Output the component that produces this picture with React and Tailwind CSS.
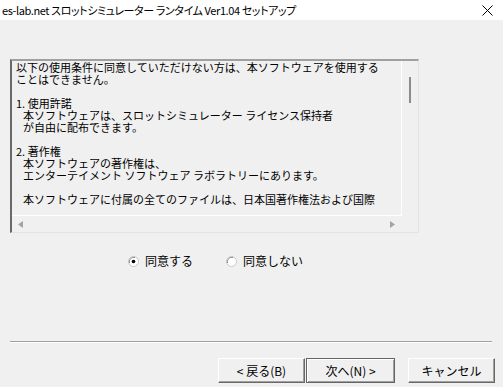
import React from 'react';

const lines = [
  ['以下の使用条件に同意していただけない方は、本ソフトウェアを使用する', 0],
  ['ことはできません。', 0],
  ['', 0],
  ['1. 使用許諾', 0],
  ['本ソフトウェアは、スロットシミュレーター ライセンス保持者', 1],
  ['が自由に配布できます。', 1],
  ['', 0],
  ['2. 著作権', 0],
  ['本ソフトウェアの著作権は、', 1],
  ['エンターテイメント ソフトウェア ラボラトリーにあります。', 1],
  ['', 0],
  ['本ソフトウェアに付属の全てのファイルは、日本国著作権法および国際', 1],
];

function Radio({ checked, label }) {
  return (
    <label className="flex items-center gap-[6px]">
      <svg width="11" height="11" viewBox="0 0 11 11">
        <circle cx="5.5" cy="5.5" r="5" fill="#ffffff" stroke="#c8c8c8" strokeWidth="1" />
        <path d="M1.5 7 A4.5 4.5 0 0 1 7 1.5" fill="none" stroke="#808080" strokeWidth="1" />
        {checked && <circle cx="5.5" cy="5.5" r="1.8" fill="#000000" />}
      </svg>
      <span>{label}</span>
    </label>
  );
}

function Button({ label, primary }) {
  return (
    <button
      className={
        primary
          ? 'w-[89px] h-[25px] border border-[#646464] bg-[#f0f0f0] shadow-[inset_1px_1px_0_#ffffff,inset_-1px_-1px_0_#a0a0a0]'
          : 'w-[87px] h-[25px] border-t border-l border-t-white border-l-white border-r border-b border-r-[#696969] border-b-[#696969] bg-[#f0f0f0] shadow-[inset_-1px_-1px_0_#a0a0a0]'
      }
    >
      {label}
    </button>
  );
}

export default function App() {
  return (
    <div
      className="w-[503px] h-[387px] bg-[#f0f0f0] flex flex-col text-[12px] text-black overflow-hidden"
      style={{ fontFamily: '"Noto Sans CJK JP", "Noto Sans", sans-serif' }}
    >
      {/* title bar */}
      <div className="h-[20px] bg-white flex items-center justify-between pl-[2px] pr-[6px]">
        <span className="text-[11px] leading-none tracking-[-0.4px] [font-feature-settings:'palt']">
          es-lab.net スロットシミュレーター ランタイム Ver1.04 セットアップ
        </span>
        <svg width="11" height="11" viewBox="0 0 11 11" className="mr-[4px]">
          <path d="M0.5 0.5 L10.5 10.5 M10.5 0.5 L0.5 10.5" stroke="#000" strokeWidth="1" />
        </svg>
      </div>

      {/* license box */}
      <div className="pl-[10px] pt-[39px]">
        <div className="w-[409px] h-[174px] border-t-2 border-l-2 border-t-[#a0a0a0] border-l-[#696969] border-r border-b border-r-[#e3e3e3] border-b-[#e3e3e3] flex flex-col">
          <div className="flex h-[155px]">
            <div className="w-[390px] border-r border-b border-white overflow-hidden pl-[4px]">
              {lines.map(([l, indent], i) => (
                <div key={i} className={indent ? 'h-[12px] leading-[12px] text-[11px] pl-[7px]' : 'h-[12px] leading-[12px] text-[11px]'}>
                  {l}
                </div>
              ))}
            </div>
            <div className="flex-1 pt-[16px] pl-[7px]">
              <div className="w-[2px] h-[26px] bg-[#8c8c8c]" />
            </div>
          </div>
          <div className="flex-1 flex items-center justify-between pl-[6px] pr-[23px]">
            <svg width="5" height="7" viewBox="0 0 5 7">
              <path d="M5 0 L0 3.5 L5 7 Z" fill="#a3a3a3" />
            </svg>
            <svg width="5" height="7" viewBox="0 0 5 7">
              <path d="M0 0 L5 3.5 L0 7 Z" fill="#a3a3a3" />
            </svg>
          </div>
        </div>
      </div>

      {/* agree radios */}
      <div className="flex pl-[128px] mt-[19px] gap-[33px]">
        <Radio checked label="同意する" />
        <Radio label="同意しない" />
      </div>

      {/* separator */}
      <div className="ml-[10px] mt-[71px] w-[482px] border-t border-t-[#a0a0a0] border-b border-b-white" />

      {/* buttons */}
      <div className="flex pl-[218px] mt-[15px]">
        <Button label="< 戻る(B)" />
        <div className="ml-[1px]">
          <Button label="次へ(N) >" primary />
        </div>
        <div className="ml-[13px]">
          <Button label="キャンセル" />
        </div>
      </div>
    </div>
  );
}
